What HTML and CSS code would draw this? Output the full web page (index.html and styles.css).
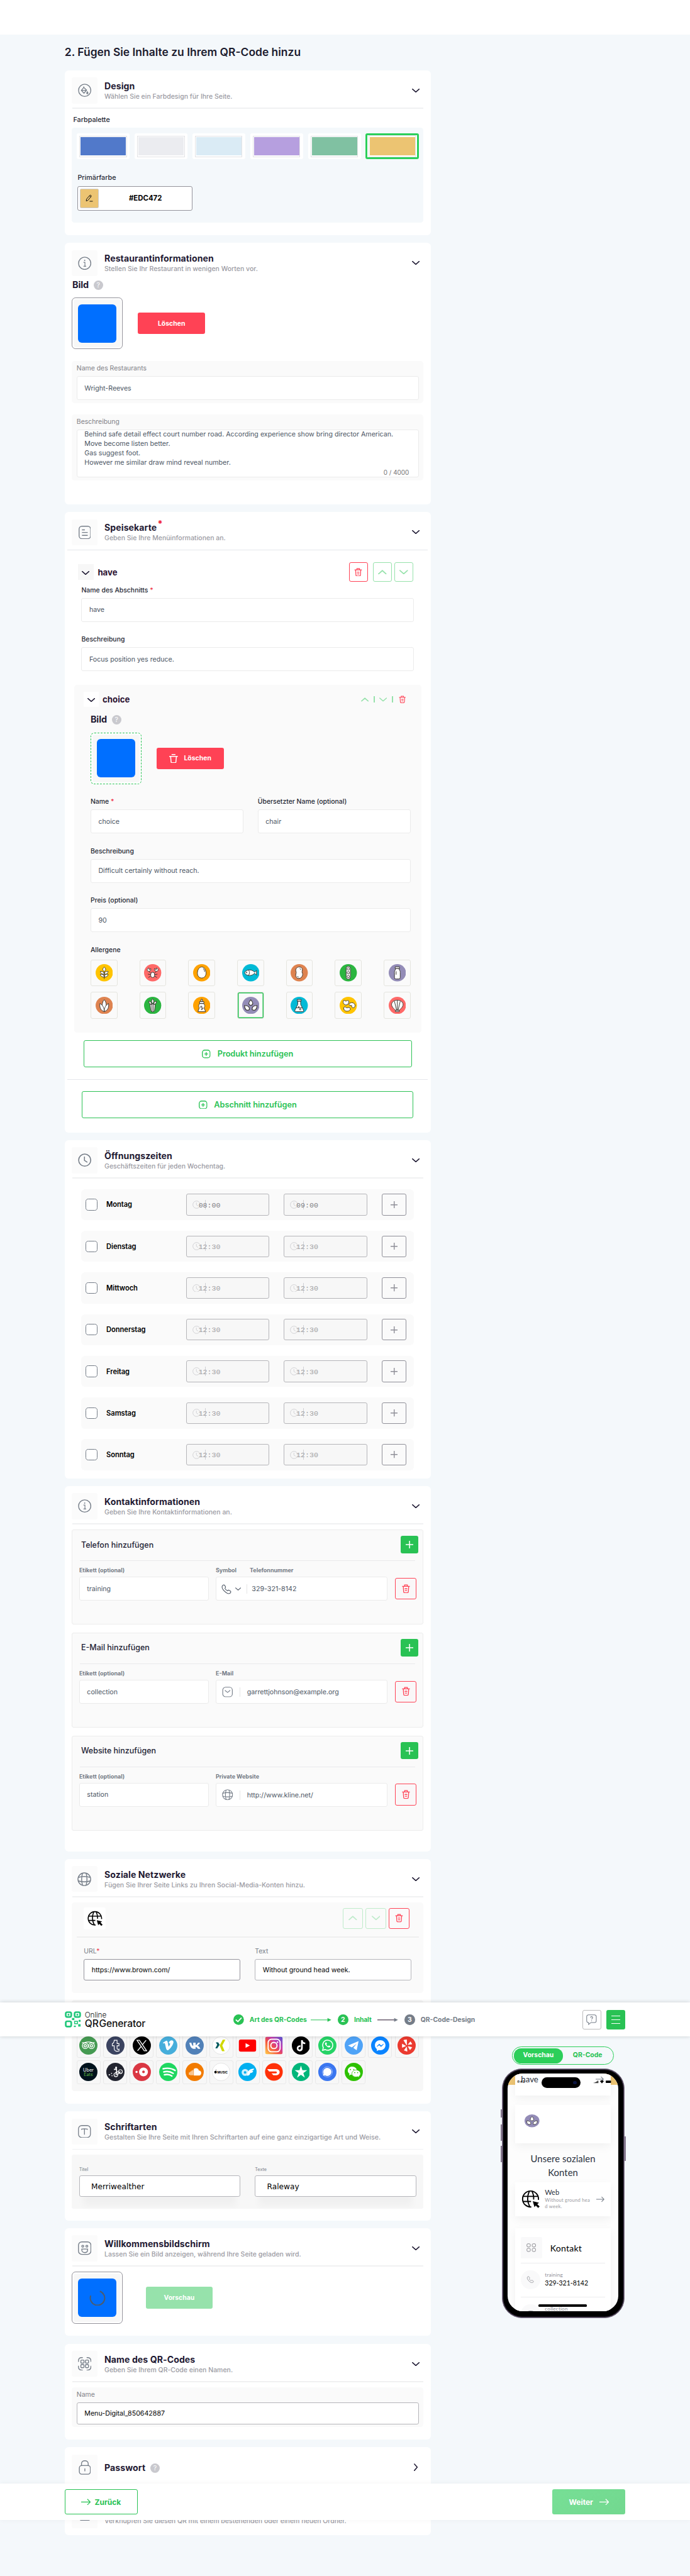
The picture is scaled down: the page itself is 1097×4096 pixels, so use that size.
FILE: index.html
```html
<!DOCTYPE html>
<html lang="de">
<head>
<meta charset="utf-8">
<title>Online QR Generator</title>
<link rel="stylesheet" href="styles.css">
</head>
<body>
<svg class="defs" width="0" height="0">
  <symbol id="chev" viewBox="0 0 16 8"><path d="M1 .8 8 7 15 .8" fill="none" stroke="currentColor" stroke-width="2" stroke-linecap="round" stroke-linejoin="round"/></symbol>
  <symbol id="trash" viewBox="0 0 18 20"><path d="M1.2 4.6h15.6M6 4V1.6h6V4M3 5l.8 11.6c.1 1.4.8 2.2 2.2 2.2h6c1.400 0 2.100-.8 2.200-2.200L15 5M6.800 10h4.400M7.300 14h3.400" fill="none" stroke="currentColor" stroke-width="1.800" stroke-linecap="round"/></symbol>
  <symbol id="plus" viewBox="0 0 16 16"><path d="M8 0v16M0 8h16" fill="none" stroke="currentColor" stroke-width="2"/></symbol>
  <symbol id="boxplus" viewBox="0 0 18 18"><rect x="1" y="1" width="16" height="16" rx="5" fill="none" stroke="currentColor" stroke-width="1.800"/><path d="M9 5.200v7.600M5.200 9h7.600" stroke="currentColor" stroke-width="1.800"/></symbol>
  <symbol id="info" viewBox="0 0 28 28"><circle cx="14" cy="14" r="12.800" fill="none" stroke="currentColor" stroke-width="1.800"/><path d="M11.500 12h3v8M11.500 20.200h5.500" fill="none" stroke="currentColor" stroke-width="1.500"/><circle cx="14" cy="8" r="1.300" fill="currentColor"/></symbol>
  <symbol id="clock" viewBox="0 0 28 28"><circle cx="14" cy="14" r="12.600" fill="none" stroke="currentColor" stroke-width="2"/><path d="M13.500 6.500v8l6 4" fill="none" stroke="currentColor" stroke-width="2"/></symbol>
  <symbol id="globe" viewBox="0 0 28 28"><g fill="none" stroke="currentColor" stroke-width="1.800"><circle cx="14" cy="14" r="12.800"/><path d="M10.500 1.700c-2.500 8-2.500 16.500 0 24.600M17.500 1.700c2.500 8 2.500 16.500 0 24.600M1.700 10.500c8-2.500 16.500-2.500 24.600 0M1.700 17.500c8 2.500 16.500 2.500 24.600 0"/></g></symbol>
  <symbol id="phone" viewBox="0 0 22 22"><path d="M2 3.800C3 1.800 5.500.600 6.800 2.200l2 3c.9 1.500-.1 2.500-1 3.500-.7.900 4.400 6.100 5.500 5.500 1.100-.900 2.100-1.800 3.500-1l3 2c1.600 1.300.4 3.900-1.500 4.900C12.500 23-1 10 2 3.800z" fill="none" stroke="currentColor" stroke-width="1.500"/></symbol>
  <symbol id="mail" viewBox="0 0 22 22"><rect x="1" y="1" width="20" height="20" rx="6" fill="none" stroke="currentColor" stroke-width="1.500"/><path d="M5.500 7.500 11 12l5.500-4.500" fill="none" stroke="currentColor" stroke-width="1.500"/></symbol>
  <symbol id="webcur" viewBox="0 0 32 32"><path d="M29.500 17.500A14 14 0 1 0 17 30M13.500 2c-4 9-4 19 1 28M18 2c2.500 5 3.500 10 3 15M2.500 11.500h27M2.500 20.500h14" fill="none" stroke="#000" stroke-width="2.100"/><path d="m19.500 20 3 10.500 2.300-2.800 4.200 4.200 2.600-2.600-4.200-4.200 3.100-2.300z"/></symbol>
  <symbol id="arrow" viewBox="0 0 20 14"><path d="M0 7h19M13 1l6 6-6 6" fill="none" stroke="currentColor" stroke-width="1.600"/></symbol>
  <symbol id="seeds" viewBox="0 0 36 36"><g fill="#fff" stroke="#3d3a36" stroke-width="1.500"><path d="M18 6c5 5.500 6 10.500 0 12-6-1.500-5-6.500 0-12z"/><path d="M5 18c7 0 11 3 10 9-6 3-10-1-10-9zM31 18c-7 0-11 3-10 9 6 3 10-1 10-9z"/></g></symbol>
</svg>

<div class="page">
<div class="strip"></div>
<div class="columns">
<main>
<h1>2. Fügen Sie Inhalte zu Ihrem QR-Code hinzu</h1>

<section class="card c-design">
  <div class="head"><span class="ic"><svg width="28" height="28" viewBox="0 0 28 28" fill="none" stroke="currentColor" stroke-width="1.700"><circle cx="14" cy="14" r="12.800"/><path d="M12 6v3M12 8l6 5.500-5.500 6.500L7 14zM7.500 14H18M19.500 17c2 3 1.500 4 0 4s-2-1 0-4z"/></svg></span>
    <div class="tt"><h2>Design</h2><p>Wählen Sie ein Farbdesign für Ihre Seite.</p></div><svg class="chev"><use href="#chev"/></svg></div>
  <div class="rule"></div>
  <div class="lbl-pal">Farbpalette</div>
  <div class="palette">
    <div class="swatches"><span class="sw s1"><i></i></span><span class="sw s2"><i></i></span><span class="sw s3"><i></i></span><span class="sw s4"><i></i></span><span class="sw s5"><i></i></span><span class="sw s6"><i></i></span></div>
    <div class="lbl-prim">Primärfarbe</div>
    <div class="picker"><span class="pick"><svg width="16" height="16" viewBox="0 0 16 16" fill="none" stroke="#111" stroke-width="1.300"><path d="m1.500 14 .5-4 7-8c1.500-1.200 3.800.8 2.700 2.500L5 12.500zM8 3l3 2.800M8.500 14.500H15"/></svg></span><b>#EDC472</b></div>
  </div>
</section>

<section class="card c-rest">
  <div class="head"><span class="ic"><svg width="28" height="28"><use href="#info"/></svg></span>
    <div class="tt"><h2>Restaurantinformationen</h2><p>Stellen Sie Ihr Restaurant in wenigen Worten vor.</p></div><svg class="chev"><use href="#chev"/></svg></div>
  <div class="bild bild-a">Bild<span class="q">?</span></div>
  <div class="imgrow ir-a"><span class="img"><i></i></span><span class="btn red">Löschen</span></div>
  <div class="fpanel fp-a"><label>Name des Restaurants</label><div class="inp">Wright-Reeves</div></div>
  <div class="fpanel fp-b"><label>Beschreibung</label><div class="inp area"><div>Behind safe detail effect court number road. According experience show bring director American.<br>Move become listen better.<br>Gas suggest foot.<br>However me similar draw mind reveal number.</div><small>0 / 4000</small></div></div>
</section>

<section class="card c-menu">
  <div class="head"><span class="ic"><svg width="26" height="28" viewBox="0 0 26 28" fill="none" stroke="currentColor" stroke-width="1.800"><rect x="1" y="1" width="24" height="26" rx="6"/><path d="M7 8.500h6M7 14h12M7 20h12"/></svg></span>
    <div class="tt tt-m"><h2>Speisekarte<sup>*</sup></h2><p>Geben Sie Ihre Menüinformationen an.</p></div><svg class="chev"><use href="#chev"/></svg></div>
  <div class="rule thin"></div>
  <div class="sect"><span class="tog"><svg class="chev2"><use href="#chev"/></svg></span><b>have</b>
    <span class="sq rd"><svg width="17" height="18"><use href="#trash"/></svg></span><span class="sq gr up"><svg width="18" height="10"><use href="#chev"/></svg></span><span class="sq gr"><svg width="18" height="10"><use href="#chev"/></svg></span></div>
  <div class="fld f1"><label>Name des Abschnitts <em>*</em></label><div class="inp">have</div></div>
  <div class="fld f2"><label>Beschreibung</label><div class="inp">Focus position yes reduce.</div></div>
  <div class="product">
    <div class="prow"><span class="tog"><svg class="chev2"><use href="#chev"/></svg></span><b>choice</b><div class="mini"><svg class="mg up" width="16" height="9"><use href="#chev"/></svg><i></i><svg class="mg" width="16" height="9"><use href="#chev"/></svg><i></i><svg class="mr" width="15" height="16"><use href="#trash"/></svg></div></div>
    <div class="bild bild-b">Bild<span class="q">?</span></div>
    <div class="imgrow ir-b"><span class="img dash"><i></i></span><span class="btn red"><svg width="18" height="19" viewBox="0 0 18 19" fill="none" stroke="#fff" stroke-width="2"><path d="M5 1h8M0 5h18M3 5.500l1 11c.1 1 .6 1.500 1.500 1.500h7c.9 0 1.400-.5 1.500-1.500l1-11"/></svg>Löschen</span></div>
    <div class="two"><div><label>Name <em>*</em></label><div class="inp">choice</div></div><div><label>Übersetzter Name (optional)</label><div class="inp">chair</div></div></div>
    <div class="pf"><label>Beschreibung</label><div class="inp">Difficult certainly without reach.</div></div>
    <div class="pf"><label>Preis (optional)</label><div class="inp">90</div></div>
    <div class="pf"><label>Allergene</label></div>
    <div class="allergens">
      <span class="al"><svg viewBox="0 0 36 36"><circle cx="18" cy="18" r="18" fill="#ffc400"/><g class="ink"><path d="M18 6c4 4 4 7 0 9-4-2-4-5 0-9zM18 21c-5 0-8-2-8-6 5 0 8 2 8 6zm0 0c5 0 8-2 8-6-5 0-8 2-8 6zM18 27c-5 0-8-2-8-6 5 0 8 2 8 6zm0 0c5 0 8-2 8-6-5 0-8 2-8 6zM18 15v16"/></g></svg></span>
      <span class="al"><svg viewBox="0 0 36 36"><circle cx="18" cy="18" r="18" fill="#ff6968"/><g class="ink"><path d="M14 19 9 14M22 19l5-5M14 22l-6-1M22 22l6-1M14 25l-5 3M22 25l5 3"/><path d="M10 8c-5 2-4 7 0 7 3 0 5-2 4-6l-3 3zM26 8c5 2 4 7 0 7-3 0-5-2-4-6l3 3z"/><rect x="14" y="17" width="8" height="11" rx="4"/></g></svg></span>
      <span class="al"><svg viewBox="0 0 36 36"><circle cx="18" cy="18" r="18" fill="#ffa200"/><g class="ink"><path d="M18 6c6 0 9 7 9 13s-4 10-9 10-9-4-9-10 3-13 9-13z"/><path d="M21 9c2 2 3 4 3 7" fill="none"/></g></svg></span>
      <span class="al"><svg viewBox="0 0 36 36"><circle cx="18" cy="18" r="18" fill="#00bad6"/><g class="ink"><path d="M5 18c2-6 14-9 21-1l4-4v10l-4-4c-7 8-19 5-21-1z"/><path d="M13 12c3 4 3 8 0 12" fill="none"/><circle cx="9" cy="17.500" r="1"/></g></svg></span>
      <span class="al"><svg viewBox="0 0 36 36"><circle cx="18" cy="18" r="18" fill="#de8350"/><g class="ink"><path d="M18 6c5 0 8 4 6 9-1 3 2 4 1 8-1 4-4 7-8 7s-7-4-6-9c1-3 1-3 0-7-1-5 3-8 7-8z"/><path d="M19 9c2 1 2 2 2 3M14 25c1 2 2 2 3 2" fill="none"/></g></svg></span>
      <span class="al"><svg viewBox="0 0 36 36"><circle cx="18" cy="18" r="18" fill="#2bb540"/><g class="ink"><rect x="13.500" y="4.500" width="9" height="27" rx="4.500"/><circle cx="18" cy="10" r="2.500"/><circle cx="18" cy="18" r="2.500"/><circle cx="18" cy="26" r="2.500"/></g></svg></span>
      <span class="al"><svg viewBox="0 0 36 36"><circle cx="18" cy="18" r="18" fill="#938cb7"/><g class="ink"><path d="M14 9v3c-2 2-2 3-2 6v10q0 3 3 3h6q3 0 3-3V18c0-3 0-4-2-6V9z"/><rect x="13.500" y="5.500" width="9" height="3.500"/><path d="M15.500 15v7" fill="none"/></g></svg></span>
      <span class="al"><svg viewBox="0 0 36 36"><circle cx="18" cy="18" r="18" fill="#de8350"/><g class="ink"><path d="M18 6c5 5 6 15 0 24-6-9-5-19 0-24z"/><path d="M9 14c-1 8 1 14 9 17 0-8-3-14-9-17zM27 14c1 8-1 14-9 17 0-8 3-14 9-17z"/></g></svg></span>
      <span class="al"><svg viewBox="0 0 36 36"><circle cx="18" cy="18" r="18" fill="#2bb540"/><g class="ink"><path d="M18 4c3 4 3 7 0 10-3-3-3-6 0-10zM10 9c4 1 6 3 6 7-4 0-6-3-6-7zM26 9c-4 1-6 3-6 7 4 0 6-3 6-7zM12.500 15h11L22 29q-4 5-8 0zM16.500 16v15M19.500 16v15"/></g></svg></span>
      <span class="al"><svg viewBox="0 0 36 36"><circle cx="18" cy="18" r="18" fill="#ffa200"/><g class="ink"><path d="M17 5h2l1 5h-4zM13.500 10h9v4h-9zM14 14h8c3 4 3 5 1 9l3 8H10l3-8c-2-4-2-5 1-9z"/><circle cx="17" cy="21" r="1.500"/><circle cx="20" cy="24" r="1"/><circle cx="18" cy="26" r="1"/></g></svg></span>
      <span class="al on"><svg viewBox="0 0 36 36"><circle cx="18" cy="18" r="18" fill="#938cb7"/><use href="#seeds"/></svg></span>
      <span class="al"><svg viewBox="0 0 36 36"><circle cx="18" cy="18" r="18" fill="#00bad6"/><g class="ink"><path d="M15 9v7L9 28q-1 3 2 3h14q3 0 2-3l-6-12V9zM14 5.500h8V9h-8zM11.500 23h13" /><circle cx="17" cy="21" r="1"/><circle cx="20" cy="26" r="1.500"/></g></svg></span>
      <span class="al"><svg viewBox="0 0 36 36"><circle cx="18" cy="18" r="18" fill="#ffc400"/><g class="ink"><path d="M8 8c2-2 3 1 5 1s4-3 6 0c1 4-2 8-6 8s-7-5-5-9zM20 15c2-4 10-4 12 2 1 5-4 7-6 5s1-4-2-4-5 0-4-3zM9 22c2-3 4 1 6 1s5-2 7 1c1 4-3 6-7 6s-8-4-6-8z"/></g></svg></span>
      <span class="al"><svg viewBox="0 0 36 36"><circle cx="18" cy="18" r="18" fill="#ff6968"/><g class="ink"><path d="M18 7c5 0 12 3 12 9 0 5-5 9-8 12h-8c-3-3-8-7-8-12 0-6 7-9 12-9zM14 28h8v3h-8z"/><path d="M16.500 28 12 9.500M19.500 28 24 9.500M18 28V7" fill="none"/></g></svg></span>
    </div>
  </div>
  <div class="add a1"><svg width="18" height="18"><use href="#boxplus"/></svg>Produkt hinzufügen</div>
  <div class="rule thin r2"></div>
  <div class="add a2"><svg width="18" height="18"><use href="#boxplus"/></svg>Abschnitt hinzufügen</div>
</section>

<section class="card c-hours">
  <div class="head"><span class="ic"><svg width="28" height="28"><use href="#clock"/></svg></span>
    <div class="tt"><h2>Öffnungszeiten</h2><p>Geschäftszeiten für jeden Wochentag.</p></div><svg class="chev"><use href="#chev"/></svg></div>
  <div class="rule"></div>
  <div class="days">
    <div class="day set"><i class="cb"></i><b>Montag</b><span class="time"><svg><use href="#clock"/></svg><u></u><s>08:00</s></span><span class="time"><svg><use href="#clock"/></svg><u></u><s>09:00</s></span><span class="pl"><svg><use href="#plus"/></svg></span></div>
    <div class="day"><i class="cb"></i><b>Dienstag</b><span class="time"><svg><use href="#clock"/></svg><u></u><s>12:30</s></span><span class="time"><svg><use href="#clock"/></svg><u></u><s>12:30</s></span><span class="pl"><svg><use href="#plus"/></svg></span></div>
    <div class="day"><i class="cb"></i><b>Mittwoch</b><span class="time"><svg><use href="#clock"/></svg><u></u><s>12:30</s></span><span class="time"><svg><use href="#clock"/></svg><u></u><s>12:30</s></span><span class="pl"><svg><use href="#plus"/></svg></span></div>
    <div class="day"><i class="cb"></i><b>Donnerstag</b><span class="time"><svg><use href="#clock"/></svg><u></u><s>12:30</s></span><span class="time"><svg><use href="#clock"/></svg><u></u><s>12:30</s></span><span class="pl"><svg><use href="#plus"/></svg></span></div>
    <div class="day"><i class="cb"></i><b>Freitag</b><span class="time"><svg><use href="#clock"/></svg><u></u><s>12:30</s></span><span class="time"><svg><use href="#clock"/></svg><u></u><s>12:30</s></span><span class="pl"><svg><use href="#plus"/></svg></span></div>
    <div class="day"><i class="cb"></i><b>Samstag</b><span class="time"><svg><use href="#clock"/></svg><u></u><s>12:30</s></span><span class="time"><svg><use href="#clock"/></svg><u></u><s>12:30</s></span><span class="pl"><svg><use href="#plus"/></svg></span></div>
    <div class="day"><i class="cb"></i><b>Sonntag</b><span class="time"><svg><use href="#clock"/></svg><u></u><s>12:30</s></span><span class="time"><svg><use href="#clock"/></svg><u></u><s>12:30</s></span><span class="pl"><svg><use href="#plus"/></svg></span></div>
  </div>
</section>

<section class="card c-contact">
  <div class="head"><span class="ic"><svg width="28" height="28"><use href="#info"/></svg></span>
    <div class="tt"><h2>Kontaktinformationen</h2><p>Geben Sie Ihre Kontaktinformationen an.</p></div><svg class="chev"><use href="#chev"/></svg></div>
  <div class="rule"></div>
  <div class="contacts">
    <div class="cp"><div class="cph">Telefon hinzufügen<span class="gplus"><svg><use href="#plus"/></svg></span></div><hr>
      <div class="crow"><div><label>Etikett (optional)</label><div class="inp">training</div></div>
      <div><div class="lb2"><label>Symbol</label><label>Telefonnummer</label></div><div class="inp tel"><svg class="ph" width="21" height="21"><use href="#phone"/></svg><svg width="12" height="7"><use href="#chev"/></svg><i></i>329-321-8142</div></div>
      <span class="del"><svg width="17" height="19"><use href="#trash"/></svg></span></div></div>
    <div class="cp"><div class="cph">E-Mail hinzufügen<span class="gplus"><svg><use href="#plus"/></svg></span></div><hr>
      <div class="crow"><div><label>Etikett (optional)</label><div class="inp">collection</div></div>
      <div><label>E-Mail</label><div class="inp ico"><svg width="23" height="22"><use href="#mail"/></svg><i></i>garrettjohnson@example.org</div></div>
      <span class="del"><svg width="17" height="19"><use href="#trash"/></svg></span></div></div>
    <div class="cp"><div class="cph">Website hinzufügen<span class="gplus"><svg><use href="#plus"/></svg></span></div><hr>
      <div class="crow"><div><label>Etikett (optional)</label><div class="inp">station</div></div>
      <div><label>Private Website</label><div class="inp ico"><svg width="23" height="23"><use href="#globe"/></svg><i></i>http://www.kline.net/</div></div>
      <span class="del"><svg width="17" height="19"><use href="#trash"/></svg></span></div></div>
  </div>
</section>

<section class="card c-social">
  <div class="head"><span class="ic"><svg width="29" height="29"><use href="#globe"/></svg></span>
    <div class="tt"><h2>Soziale Netzwerke</h2><p>Fügen Sie Ihrer Seite Links zu Ihren Social-Media-Konten hinzu.</p></div><svg class="chev"><use href="#chev"/></svg></div>
  <div class="rule"></div>
  <div class="web">
    <div class="webh"><span class="wi"><svg width="32" height="32"><use href="#webcur"/></svg></span><span class="sq gr up"><svg width="18" height="10"><use href="#chev"/></svg></span><span class="sq gr"><svg width="18" height="10"><use href="#chev"/></svg></span><span class="sq rd"><svg width="17" height="18"><use href="#trash"/></svg></span></div>
    <div class="webr"></div>
    <div class="webf"><div><label>URL<em>*</em></label><div class="inp dk">https://www.brown.com/</div></div><div><label>Text</label><div class="inp md">Without ground head week.</div></div></div>
  </div>
  <div class="tiles">
    <span><svg viewBox="0 0 38 38"><circle cx="19" cy="19" r="19" fill="#459a52"/><g fill="none" stroke="#fff" stroke-width="1.800"><circle cx="12.500" cy="19.500" r="6"/><circle cx="25.500" cy="19.500" r="6"/><circle cx="12.500" cy="19.500" r="2.500"/><circle cx="25.500" cy="19.500" r="2.500"/><path d="M6 13.500h4c5-2 13-2 18 0h4"/></g></svg></span>
    <span><svg viewBox="0 0 38 38"><circle cx="19" cy="19" r="19" fill="#3b4360"/><path d="M16.500 8h6v7h4v4.500h-4V25c0 2 2 2.500 4 1.500v4c-5 1.500-10 0-10-5v-6h-4v-4c3-1.500 4-4 4-7.500z" fill="none" stroke="#fff" stroke-width="1.500"/></svg></span>
    <span><svg viewBox="0 0 38 38"><circle cx="19" cy="19" r="19" fill="#000"/><path d="M9 8h5l15 22h-5zM28 8 20 17.500M17.500 21 10 30" fill="none" stroke="#fff" stroke-width="1.800"/></svg></span>
    <span><svg viewBox="0 0 38 38"><circle cx="19" cy="19" r="19" fill="#46aedb"/><path d="m8 13 7-4c3 0 3 4 4 9 1 4 1 4 3 0 2-3 1-4-2-4 1-7 10-8 10-2-1 7-9 16-12 17-4 0-4-9-6-14-1-2-2-1-3 0z" fill="#fff"/></svg></span>
    <span><svg viewBox="0 0 38 38"><circle cx="19" cy="19" r="19" fill="#5181b8"/><path d="M8 13h4c1 5 3 7 4 7v-7h5v5c2 0 4-3 5-5h4c-1 3-3 5-5 6 2 1 5 4 6 7h-5c-1-2-3-4-5-4v4h-3c-6 0-9-6-10-13z" fill="#fff"/></svg></span>
    <span><svg viewBox="0 0 38 38"><circle cx="19" cy="19" r="18.500" fill="#fff" stroke="#ddd"/><path d="M8 12.500h5l3 5-5 7.500H7l4-7.500z" fill="#005a5f"/><path d="M22.500 7H28l-6.500 12 5 12H21l-5-12z" fill="#d0d800"/></svg></span>
    <span><svg viewBox="0 0 38 38"><rect x="1" y="6.500" width="36" height="25.500" rx="4" fill="#f00"/><path d="m15 14 9 5-9 5z" fill="#fff"/></svg></span>
    <span><svg viewBox="0 0 38 38"><defs><linearGradient id="ig" x1="0" y1="1" x2="1" y2="0"><stop offset="0" stop-color="#ffd04b"/><stop offset=".4" stop-color="#f5533d"/><stop offset=".65" stop-color="#c837ab"/><stop offset="1" stop-color="#5558d6"/></linearGradient></defs><rect x="1" y="1" width="36" height="36" rx="3" fill="url(#ig)"/><g fill="none" stroke="#fff" stroke-width="2.500"><rect x="7" y="6" width="25" height="26" rx="7"/><circle cx="19" cy="19" r="6.500"/></g><circle cx="26.500" cy="12" r="1.600" fill="#fff"/></svg></span>
    <span><svg viewBox="0 0 38 38"><circle cx="19" cy="19" r="19" fill="#000"/><path d="M21 8v16c0 7-9 7-9 1 0-4 3-5 6-4.500M21 8c0 4 3 6.500 7 6.500" fill="none" stroke="#fff" stroke-width="3.500"/></svg></span>
    <span><svg viewBox="0 0 38 38"><circle cx="19" cy="19" r="19" fill="#25d366"/><path d="m9 29 1.500-5.500A10.500 10.500 0 1 1 14.500 27.500z" fill="none" stroke="#fff" stroke-width="2"/><path d="M15 13c-2 2-1 4 2 7s6 4 8 2c1-2-2-3-3-3l-1.500 1.500C19 20 17.500 18 17 17l1-1.500c0-1-1-4-3-2.500z" fill="#fff"/></svg></span>
    <span><svg viewBox="0 0 38 38"><circle cx="19" cy="19" r="19" fill="#4fa3f7"/><path d="m7 19 22-9-4 19-7-5 7-9-10 8z" fill="#fff"/></svg></span>
    <span><svg viewBox="0 0 38 38"><circle cx="19" cy="19" r="19" fill="#0a84ff"/><path d="M19 8c6 0 11 4 11 10.500S25 29 19 29l-3-.5-4 2v-4c-3-2-4-5-4-8C8 12 13 8 19 8z" fill="#fff"/><path d="m12 21 5-5 4 3.500 5-3.500-5 5.500-4-3.500z" fill="#0a84ff" stroke="#0a84ff"/></svg></span>
    <span><svg viewBox="0 0 38 38"><circle cx="19" cy="19" r="19" fill="#eb3a2f"/><path d="m13 8 6-1v11zM22 17l5-6 3 5zM22 21l8 2-4 5zM19 22l1 9-6-2zM17 20l-7 3v-7z" fill="#fff" stroke="#fff" stroke-linejoin="round"/></svg></span>
    <span><svg viewBox="0 0 38 38"><circle cx="19" cy="19" r="19" fill="#00121c"/><text x="19" y="18" text-anchor="middle" font-size="9.500" fill="#fff">Uber</text><text x="19" y="27" text-anchor="middle" font-size="9.500" fill="#5fb545">Eats</text></svg></span>
    <span><svg viewBox="0 0 38 38"><circle cx="19" cy="19" r="19" fill="#22242f"/><g fill="none" stroke="#fff" stroke-width="1.500"><circle cx="20" cy="25" r="4"/><circle cx="29.500" cy="18.500" r="4"/><path d="m20 25 2-6 7 0-5 5z"/><path d="m16 14 5-1 1 6-3 2" stroke-width="2.500"/></g><circle cx="20.500" cy="10" r="2" fill="#fff"/><path d="M5 25h3M10 22h2M11 27h2" stroke="#fff" stroke-width="2"/></svg></span>
    <span><svg viewBox="0 0 38 38"><circle cx="19" cy="19" r="19" fill="#da3743"/><circle cx="22.500" cy="19" r="6" fill="none" stroke="#fff" stroke-width="6.500"/><circle cx="8" cy="19" r="2.300" fill="#fff"/></svg></span>
    <span><svg viewBox="0 0 38 38"><circle cx="19" cy="19" r="19" fill="#1ed760"/><path d="M13 13c-1 0 8-2 24 2M9 0" fill="none"/><path d="M13.500 12.500c7-1.500 15-.5 22 3" transform="translate(-4)" fill="none" stroke="#fff" stroke-width="0"/><path d="M7.500 12.500c9-2 20-1 28 3.500M9 19c8-2 15-1 22 3M10.500 25c6-1.500 12-1 17.500 2.500" transform="translate(1.500)scale(.9 1)" fill="none" stroke="#fff" stroke-width="3.200" stroke-linecap="round"/></svg></span>
    <span><svg viewBox="0 0 38 38"><circle cx="19" cy="19" r="19" fill="#f27b00"/><path d="M18 13c5-3 9 0 9 4 7-1 6 9 1 9H18zM8 20v5M10.500 18v8M13 16.500V26M15.500 15v11" fill="#fff" stroke="#fff" stroke-width="1.400"/></svg></span>
    <span><svg viewBox="0 0 38 38"><circle cx="19" cy="19" r="18.500" fill="#fff" stroke="#ddd"/><circle cx="7.500" cy="19.500" r="2.700"/><path d="m8 16 1-1.500" stroke="#000"/><text x="22" y="21.800" text-anchor="middle" font-size="6.500" font-weight="700" fill="#000">MUSIC</text></svg></span>
    <span><svg viewBox="0 0 38 38"><circle cx="19" cy="19" r="19" fill="#00aff0"/><circle cx="14" cy="20" r="5" fill="none" stroke="#cfeffc" stroke-width="4.500"/><path d="M18 27c1-10 5-15 15-15-1 3-3 4-6 5h4c-1 3-3 4-6 4-1 4-3 6-7 6z" fill="#fff"/></svg></span>
    <span><svg viewBox="0 0 38 38"><circle cx="19" cy="19" r="18.500" fill="#ff3008"/><path d="M5 13h19c10 1 9 13-1 13h-5l-4-4h9c3 0 3-4 0-4H9z" fill="#fff"/></svg></span>
    <span><svg viewBox="0 0 38 38"><circle cx="19" cy="19" r="19" fill="#00b67a"/><path d="m19 6 3 9.500h10l-8 6 3 9.500-8-6-8 6 3-9.500-8-6h10z" fill="#fff"/></svg></span>
    <span><svg viewBox="0 0 38 38"><circle cx="19" cy="19" r="19" fill="#3a76f0"/><path d="M19 10.500a8.500 8.500 0 1 1-4.500 15.700L10 27l1-4.500a8.500 8.500 0 0 1 8-12z" fill="#fff"/><circle cx="19" cy="19" r="10.500" fill="none" stroke="#fff" stroke-dasharray="2 1"/></svg></span>
    <span><svg viewBox="0 0 38 38"><circle cx="19" cy="19" r="19" fill="#2dc100"/><path d="M15.500 8c6 0 10 4 10 8.500S21 25 15.500 25l-3-.5L9 26.500l1-3.500C3 18 7 8 15.500 8z" fill="#fff"/><path d="M24 15c5 0 9 3.500 9 7.500 0 2.500-1 4-3 5.500l.5 2.500-3-1.500C20 31 15 27 15 22.500c0-4 4-7.500 9-7.500z" fill="#fff" stroke="#2dc100"/><g fill="#2dc100"><circle cx="12" cy="14" r="1.200"/><circle cx="19" cy="14" r="1.200"/><circle cx="21" cy="20.500" r="1.200"/><circle cx="27" cy="20.500" r="1.200"/></g></svg></span>
  </div>
</section>

<section class="card c-fonts">
  <div class="head"><span class="ic"><svg width="27" height="27" viewBox="0 0 27 27" fill="none" stroke="currentColor" stroke-width="1.700"><rect x="1" y="1" width="25" height="25" rx="7"/><path d="M7.500 10V8.500Q13.500 7 19.500 8.500V10M13.500 8v12"/></svg></span>
    <div class="tt"><h2>Schriftarten</h2><p class="wide">Gestalten Sie Ihre Seite mit Ihren Schriftarten auf eine ganz einzigartige Art und Weise.</p></div><svg class="chev"><use href="#chev"/></svg></div>
  <div class="rule"></div>
  <div class="fonts"><div><label>Titel</label><div class="inp">Merriwealther</div></div><div><label>Texte</label><div class="inp">Raleway</div></div></div>
</section>

<section class="card c-welcome">
  <div class="head"><span class="ic"><svg width="28" height="28" viewBox="0 0 28 28" fill="none" stroke="currentColor" stroke-width="1.800"><rect x="1" y="1" width="26" height="26" rx="7"/><circle cx="10" cy="10" r="2"/><circle cx="18.500" cy="10" r="2"/><path d="M8 16h12v2c0 7-12 7-12 0z"/></svg></span>
    <div class="tt"><h2>Willkommensbildschirm</h2><p>Lassen Sie ein Bild anzeigen, während Ihre Seite geladen wird.</p></div><svg class="chev"><use href="#chev"/></svg></div>
  <div class="rule"></div>
  <div class="imgrow ir-c"><span class="img"><i><svg width="34" height="34" viewBox="0 0 34 34" fill="none" stroke="#4b5c6f" stroke-width="2.600"><path d="M3 12a15 15 0 1 0 19-9"/></svg></i></span><span class="btn grn">Vorschau</span></div>
</section>

<section class="card c-name">
  <div class="head"><span class="ic"><svg width="28" height="28" viewBox="0 0 28 28" fill="none" stroke="currentColor" stroke-width="1.800"><path d="M1 10V8c0-5 2-7 7-7h2M18 1h2c5 0 7 2 7 7v2M27 18v2c0 5-2 7-7 7h-2M10 27H8c-5 0-7-2-7-7v-2"/><rect x="6" y="6" width="6.500" height="6.500" rx="1.500"/><rect x="15.500" y="6" width="6.500" height="6.500" rx="1.500"/><rect x="6" y="15.500" width="6.500" height="6.500" rx="1.500"/><rect x="15.500" y="15.500" width="6.500" height="6.500" rx="1.500"/></svg></span>
    <div class="tt"><h2>Name des QR-Codes</h2><p>Geben Sie Ihrem QR-Code einen Namen.</p></div><svg class="chev"><use href="#chev"/></svg></div>
  <div class="rule"></div>
  <div class="fpanel fp-c"><label>Name</label><div class="inp md">Menu-Digital_850642887</div></div>
</section>

<section class="card c-pass">
  <div class="head"><span class="ic"><svg width="26" height="30" viewBox="0 0 26 30" fill="none" stroke="currentColor" stroke-width="1.800"><rect x="1.500" y="11" width="23" height="18" rx="5"/><path d="M6 11V7c0-8 14-8 14 0v4M13 17v6"/></svg></span>
    <div class="tt tt-p"><h2>Passwort</h2><span class="q">?</span></div><svg class="chevr"><use href="#chev"/></svg></div>
</section>

<section class="card c-folder">
  <div class="head"><span class="ic"><svg width="26" height="24" viewBox="0 0 26 24" fill="none" stroke="currentColor" stroke-width="1.800"><path d="M1 7q0-6 6-6h3l3 4h6q6 0 6 6v6q0 6-6 6H7q-6 0-6-6z"/></svg></span>
    <div class="tt"><h2>Ordner</h2><p>Verknüpfen Sie diesen QR mit einem bestehenden oder einem neuen Ordner.</p></div></div>
</section>
</main>

<aside>
  <div class="tabs"><b>Vorschau</b><b>QR-Code</b></div>
  <div class="device">
    <div class="screen">
      <div class="band"></div>
      <div class="pc have">have<svg width="17" height="13"><use href="#arrow"/></svg></div>
      <div class="pc dish"><svg width="31" height="27" viewBox="0 0 36 36" preserveAspectRatio="none"><circle cx="18" cy="18" r="18" fill="#938cb7"/><use href="#seeds"/></svg></div>
      <h3>Unsere sozialen Konten</h3>
      <div class="pc link"><svg width="39" height="38"><use href="#webcur"/></svg><div><b>Web</b><small>Without ground hea<br>d week.</small></div><svg class="go" width="17" height="13"><use href="#arrow"/></svg></div>
      <div class="pc kontakt">
        <div class="kh"><span><svg width="20" height="18" viewBox="0 0 20 18" fill="none" stroke="#8a8a90" stroke-width="1.300"><rect x="1" y="1" width="7" height="6.500" rx="2"/><rect x="12" y="1" width="7" height="6.500" rx="2"/><rect x="1" y="10.500" width="7" height="6.500" rx="2"/><rect x="12" y="10.500" width="7" height="6.500" rx="2"/></svg></span>Kontakt</div>
        <div class="kr"><span><svg width="16" height="15"><use href="#phone"/></svg></span><div><small>training</small><b>329-321-8142</b></div></div>
        <div class="kr"><span><svg width="15" height="14"><use href="#mail"/></svg></span><div><small>collection</small></div></div>
      </div>
      <div class="status"><b>9:41</b><svg width="37" height="8" viewBox="0 0 37 8"><path d="M1 7V6M3.500 7V5M6 7V3.500M8.500 7V2" stroke="#000" stroke-width="1.800"/><path d="M13 3c2.500-2.500 5.500-2.500 8 0l-4 4.500z"/><rect x="25" y="1.500" width="11" height="5" rx="1"/></svg></div>
      <div class="island"><i></i></div>
      <div class="homebar"></div>
    </div>
  </div>
</aside>
</div>

<header class="bar">
  <div class="logo"><svg width="34" height="34" viewBox="0 0 34 34"><g fill="none" stroke="#21c77a" stroke-width="3.500"><rect x="2" y="2" width="11.500" height="10" rx="3"/><rect x="20.500" y="2" width="11.500" height="10" rx="3"/><rect x="2" y="21" width="11.500" height="11" rx="3"/></g><g fill="#21c77a"><rect x="6" y="5.500" width="3.500" height="3.500"/><rect x="24.500" y="5.500" width="3.500" height="3.500"/><rect x="15" y="14" width="5" height="4.500"/><rect x="29" y="18" width="4" height="4"/><rect x="28" y="27" width="5" height="5"/><rect x="19" y="30" width="4" height="3"/></g><rect x="20.500" y="21" width="6" height="5" fill="none" stroke="#21c77a" stroke-width="2"/></svg><div><span>Online</span><strong>QR Generator</strong></div></div>
  <div class="steps">
    <svg width="22" height="22" viewBox="0 0 22 22"><circle cx="11" cy="11" r="11" fill="#29c254"/><path d="m5 11 4.500 4 7.500-8" fill="none" stroke="#fff" stroke-width="2.400"/></svg><b class="g st1">Art des QR-Codes</b>
    <svg class="arr" width="43" height="10" viewBox="0 0 43 10"><path d="M0 5h36" stroke="#29c254" stroke-width="1.300"/><path d="m35 1 8 4-8 4z" fill="#29c254"/></svg>
    <i class="num gn">2</i><b class="g st2">Inhalt</b>
    <svg class="arr2" width="43" height="10" viewBox="0 0 43 10"><path d="M0 5h36" stroke="#220e27" stroke-width="1.300"/><path d="m35 1 8 4-8 4z" fill="#757d88"/></svg>
    <i class="num">3</i><b class="st3">QR-Code-Design</b>
  </div>
  <span class="help"><svg width="22" height="22" viewBox="0 0 22 22" fill="none" stroke="#757d88" stroke-width="1.400"><path d="M1 5q0-4 4-4h12q4 0 4 4v8q0 4-4 4h-7l-5 4v-4q-4 0-4-4z"/><path d="M9 7c0-3 4.500-3 4.500 0 0 1.500-2.200 1.800-2.200 3.500M11.300 12.500v1.500"/></svg></span>
  <span class="menu"><i></i><i></i><i></i></span>
</header>

<footer class="foot">
  <span class="back"><svg width="20" height="14"><use href="#arrow"/></svg>Zurück</span>
  <span class="next">Weiter<svg width="20" height="14"><use href="#arrow"/></svg></span>
</footer>
</div>
</body>
</html>
```
FILE: styles.css
```css
* { box-sizing: border-box; }
html { background: #f4f8fb; overflow: hidden; }
body { margin: 0; zoom: 0.7618; width: 1440px; height: 5376px; overflow: hidden; font-family: Inter, "Open Sans", sans-serif; color: #1f1f35; }
h1, h2, h3, p { margin: 0; }
em, i { font-style: normal; }
.defs { position: absolute; }
.page { position: relative; width: 1440px; height: 5376px; overflow: hidden; background: #f4f8fb; }
.strip { height: 72px; background: #fff; }
.columns { display: flex; padding: 0 135px; height: 5304px; overflow: hidden; }
main { width: 764px; }
svg { display: block; flex: none; }
h1 { margin: 22px 0 23px; font-size: 22.900px; font-weight: 600; line-height: 30px; color: #1b1b2e; white-space: nowrap; }

.card { background: #fff; border-radius: 8px; margin-bottom: 16px; overflow: hidden; }
.c-design { height: 344px; }
.c-rest { height: 546px; }
.c-menu { height: 1295px; }
.c-hours { height: 706px; }
.c-contact { height: 762px; }
.c-social { height: 511px; }
.c-fonts { height: 228px; }
.c-welcome { height: 225px; }
.c-name { height: 200px; }
.c-pass, .c-folder { height: 84px; }

.head { display: flex; align-items: center; height: 69px; padding: 15px 23px 0 15px; }
.ic { width: 53px; height: 54px; border-radius: 4px; background: #fbfbfb; color: #757d88; display: flex; align-items: center; justify-content: center; }
.tt { margin: 3px 0 0 15px; flex: 1; }
.tt h2 { font-size: 18.5px; line-height: 22px; font-weight: 700; letter-spacing: .1px; color: #1f1a33; }
.tt p { font-size: 13.8px; line-height: 20px; font-weight: 500; color: #9b9ba3; white-space: nowrap; }
.tt p.wide { font-size: 13.950px; }
.tt-m h2 { position: relative; line-height: 24px; }
.tt-m p { line-height: 22px; }
.tt-m sup { position: absolute; top: -6px; left: 111px; font-size: 19px; line-height: 22px; color: #f01530; }
.tt-p { display: flex; align-items: center; gap: 10px; }
.chev { width: 16px; height: 8px; color: #1f1a33; }
.chevr { width: 16px; height: 8px; color: #1f1a33; transform: rotate(-90deg); }
.rule { height: 2px; margin: 9px 16px 0; background: #f0f1f2; }
.thin { height: 1px; margin: 9px 6px 0; background: #e5e7eb; }

.lbl-pal, .lbl-prim { font-size: 14.1px; line-height: 20px; font-weight: 500; color: #1f2733; }
.lbl-pal { margin: 13px 18px 7px; }
.palette { margin: 0 15px; height: 198px; padding: 12px 10px; background: #f4f8fb; border-radius: 6px; }
.swatches { display: grid; grid-template-columns: repeat(6, 1fr); gap: 10px; }
.sw { height: 53px; background: #fff; border-radius: 4px; padding: 4px 6px; }
.sw i { display: block; height: 45px; border: 1px solid #e3e3e6; background-clip: content-box; padding: 2px 1px; }
.s1 i { background-color: #5179ca; }
.s2 i { background-color: #ebecf0; }
.s3 i { background-color: #daebf5; }
.s4 i { background-color: #b69fdf; }
.s5 i { background-color: #80c1a2; }
.s6 { border: 4px solid #2ccf5a; padding: 0 2px; }
.s6 i { background-color: #ecc472; }
.lbl-prim { margin: 29px 2px 7px; }
.picker { margin-left: 2px; width: 240px; height: 52px; border: 2px solid #94939b; border-radius: 4px; background: #fff; display: flex; align-items: center; padding-left: 3px; color: #000; font-size: 15px; }
.picker b { flex: 1; text-align: center; }
.pick { width: 40px; height: 40px; border: 1px solid #ccc; border-radius: 3px; background: #ecc472; display: flex; align-items: center; justify-content: center; }

.bild { display: flex; align-items: center; height: 22px; font-size: 19px; line-height: 22px; font-weight: 700; letter-spacing: -.2px; color: #1f1a33; }
.q { width: 20px; height: 20px; border-radius: 50%; background: #c9c9ce; color: #fff; font-size: 14px; line-height: 20px; text-align: center; font-weight: 400; }
.bild .q { margin: 1px 0 0 10px; }
.bild-a { margin: 8px 16px 15px; }
.imgrow { display: flex; align-items: center; }
.img { width: 106px; height: 108px; border: 2px solid #94939b; border-radius: 8px; padding: 2px; background: #f7f7f7 content-box; display: flex; align-items: center; justify-content: center; }
.img i { width: 80px; height: 80px; border-radius: 8px; background: #006fff; display: flex; align-items: center; justify-content: center; }
.dash { border: 1px dashed #29c254; background: linear-gradient(#f7f7f7, #f7f7f7) content-box, #fff; }
.btn { width: 140px; height: 45px; border-radius: 4px; color: #fff; font-size: 13.7px; font-weight: 700; display: flex; align-items: center; justify-content: center; gap: 13px; }
.red { background: #ff4255; }
.grn { background: #96e2ab; }
.ir-a { margin: 0 15px 24px; gap: 32px; }
.ir-b { gap: 32px; }
.ir-c { margin: 11px 15px 0; gap: 48px; }

label { display: block; padding-top: 1px; margin-bottom: -1px; font-size: 13.7px; line-height: 20px; color: #1f2733; font-weight: 500; white-space: nowrap; }
label em { color: #f0354b; }
.inp { height: 50px; border: 2px solid #ebebeb; border-radius: 4px; background: #fff; padding: 1px 15px 0; font-size: 14px; line-height: 46px; color: #4b5563; margin-top: 7px; white-space: nowrap; }
.fpanel { margin: 0 15px; padding: 5px 10px; background: #fafafa; border-radius: 6px; }
.fpanel label { color: #808086; font-weight: 400; }
.fp-a { height: 88px; margin-bottom: 24px; }
.fp-b { height: 138px; }
.fp-c { height: 83px; margin-top: 11px; }
.area { height: 100px; line-height: 20px; overflow: hidden; }
.area div { margin-top: -3px; }
.area small { display: block; text-align: right; margin: 0 4px 0; font-size: 13px; line-height: 20px; color: #757575; }
.inp.dk { height: 45px; line-height: 41px; border-color: #94939b; color: #000; }
.inp.md { height: 45px; line-height: 43px; border: 1px solid #b5b5ba; color: #000; }

.sect { display: flex; align-items: center; margin: 26px 36px 0 28px; height: 40px; }
.sect b, .prow b { flex: 1; margin-left: 9px; font-size: 17.400px; color: #2a1030; }
.tog { width: 32px; height: 32px; background: #f7f7f7; display: flex; align-items: center; justify-content: center; color: #1f1a33; }
.chev2 { width: 16px; height: 8px; margin-top: 3px; }
.sq { width: 40px; height: 40px; border: 1px solid; border-radius: 4px; display: flex; align-items: center; justify-content: center; }
.sq.rd { color: #ff4255; }
.sq.gr { color: #96e2ab; }
.sect .up { margin: 0 5px 0 10px; }
.up svg, svg.up { transform: scaleY(-1); }
.fld { margin: 7px 35px 0; }
.f2 { margin-top: 26px; }
.product { margin: 29px 20px 0; height: 725px; padding: 14px 22px 0 34px; background: #fafafa; border-radius: 6px; }
.prow { display: flex; align-items: center; height: 32px; margin-left: -15px; }
.prow .tog { background: #fff; }
.prow b { margin-left: 8px; }
.mini { display: flex; align-items: center; gap: 10px; margin-right: 10px; }
.mini i { width: 2px; height: 14px; background: #96e2ab; }
.mg { color: #96e2ab; }
.mr { color: #ff4255; margin-left: 2px; }
.bild-b { margin: 15px 0 16px; }
.two { display: grid; grid-template-columns: 1fr 1fr; gap: 30px; margin-top: 26px; }
.pf { margin-top: 26px; }
.allergens { margin-top: 11px; display: grid; grid-template-columns: repeat(7, 56px); justify-content: space-between; row-gap: 12px; }
.al { height: 56px; border: 2px solid #e5e5df; border-radius: 4px; display: flex; align-items: center; justify-content: center; }
.al svg { width: 36px; height: 36px; }
.al.on { box-shadow: inset 0 0 0 2px #29c254; }
.ink { fill: #fff; stroke: #3d3a36; stroke-width: 1.300px; stroke-linejoin: round; }
.add { height: 56px; border: 1px solid #2cc255; border-radius: 4px; display: flex; align-items: center; justify-content: center; gap: 14px; color: #29c254; font-size: 16.800px; font-weight: 600; letter-spacing: -.1px; }
.a1 { margin: 17px 39px 0; }
.r2 { margin-top: 25px; }
.a2 { margin: 24px 36px 0; }

.days { margin: 22px 35px 0; display: flex; flex-direction: column; gap: 22px; }
.day { height: 65px; background: #fafafa; border-radius: 8px; padding: 0 16px 0 9px; display: flex; align-items: center; }
.cb { width: 24px; height: 24px; border: 2px solid #757d88; border-radius: 6px; background: #fff; }
.day b { flex: 1; margin-left: 19px; font-size: 14.700px; font-weight: 600; letter-spacing: -.1px; color: #000; }
.time { width: 174px; height: 45px; margin-right: 30px; border: 1px solid #b5b5b9; border-radius: 4px; background: #f7f7f7; display: flex; align-items: center; padding-left: 12px; }
.time svg { width: 17px; height: 17px; color: #cfcfd3; }
.time u { width: 1px; height: 20px; margin-left: 10px; background: #d0d0d4; }
.time s { margin-left: -15px; text-decoration: none; font: 15.300px/20px "Liberation Mono", monospace; color: #a0a0a3; padding-top: 2px; }
.set s { color: #808084; }
.pl { width: 51px; height: 45px; margin-left: 1px; border: 1px solid #8f8f98; border-radius: 4px; display: flex; align-items: center; justify-content: center; color: #8f8f98; }
.pl svg { width: 15px; height: 15px; }

.contacts { margin: 11px 15px 0; display: flex; flex-direction: column; gap: 17px; }
.cp { height: 198px; border: 1px solid #ececec; border-radius: 4px; background: #fafafa; }
.cph { display: flex; align-items: center; justify-content: space-between; height: 36px; margin: 12px 10px 0 18px; font-size: 16.400px; font-weight: 500; }
.gplus { width: 36px; height: 36px; border-radius: 4px; background: #29c254; color: #fff; display: flex; align-items: center; justify-content: center; }
.gplus svg { width: 16px; height: 16px; }
.cp hr { border: 0; height: 1px; background: #e9e9eb; margin: 15px 16px 11px; }
.crow { display: grid; grid-template-columns: 270px 359px 45px; gap: 15px; margin-left: 14px; }
.crow label { font-size: 11.800px; line-height: 16px; font-weight: 700; color: #757c86; }
.crow .inp { margin-top: 6px; }
.lb2 { display: flex; margin-bottom: -1px; }
.lb2 label { margin-bottom: 0; }
.lb2 label:first-child { width: 71px; }
.tel, .ico { display: flex; align-items: center; }
.tel { padding-left: 11px; }
.tel svg { margin-right: 8px; margin-top: 1px; color: #4b5563; }
.tel i { width: 2px; height: 20px; background: #e5e5e5; margin: 0 9px 0 3px; }
.ico { padding-left: 12px; }
.ico svg { color: #757d88; }
.ico i { width: 2px; height: 20px; background: #e5e5e5; margin: 0 14px 0 13px; }
.del { width: 45px; height: 45px; margin-top: 24px; border: 1px solid #ff4255; border-radius: 4px; background: #faf7f8; color: #ff4255; display: flex; align-items: center; justify-content: center; }

.web { margin: 11px 15px 0; height: 189px; padding-top: 10px; background: #fafafa; border-radius: 6px; }
.webh { display: flex; align-items: center; gap: 5px; margin: 0 30px 0 25px; height: 46px; }
.wi { width: 46px; height: 46px; background: #fff; border-radius: 4px; display: flex; align-items: center; justify-content: center; margin-right: auto; }
.webh .sq { width: 43px; height: 43px; }
.webh .gr { color: #bfebcb; }
.webr { margin: 15px 10px 18px; height: 2px; background: #efefef; }
.webf { display: grid; grid-template-columns: 1fr 1fr; gap: 30px; margin: 0 25px; }
.webf label { color: #757c86; font-weight: 400; }
.tiles { margin: 15px 15px 0; height: 190px; padding: 70px 10px 0; background: #f7f7f7; border-radius: 6px; display: grid; grid-template-columns: repeat(13, 50px); justify-content: space-between; grid-auto-rows: 50px; row-gap: 5px; }
.tiles span { border: 1px solid #e9e9e9; border-radius: 4px; display: flex; align-items: center; justify-content: center; }
.tiles svg { width: 38px; height: 38px; }

.fonts { margin: 11px 15px 0; height: 112px; padding: 22px 15px 0; background: #f7f7f7; border-radius: 4px; display: grid; grid-template-columns: 1fr 1fr; gap: 30px; }
.fonts label { font-size: 9.500px; line-height: 16px; font-weight: 400; color: #757c86; }
.fonts .inp { height: 45px; margin-top: 5px; padding-left: 24px; line-height: 43px; border: 1px solid #b5b5ba; color: #000; font-family: "DejaVu Sans", sans-serif; font-size: 16px; box-shadow: 0 27px 14px -8px rgba(0, 0, 0, .03); }

aside { width: 256px; margin: 4200px 0 0 148px; }
.tabs { width: 212px; height: 38px; margin: 0 0 8px 22px; border: 2px solid #2ccf5a; border-radius: 19px; padding: 2px; display: flex; font-size: 13.700px; line-height: 30px; text-align: center; color: #29c254; }
.tabs b { flex: 1; }
.tabs b:first-child { background: #2ccf5a; color: #fff; border-radius: 15px; }
.device { width: 256px; height: 520px; border-radius: 42px; background: #000; border: 2px solid #85788e; box-shadow: inset 0 0 0 1.500px #3f3649; padding: 8px 10px 11px; position: relative; }
.device::before { content: ""; position: absolute; left: -4px; top: 84px; width: 3px; height: 110px; background: linear-gradient(#85788e 17px, transparent 17px 32px, #85788e 32px 66px, transparent 66px 76px, #85788e 76px); }
.device::after { content: ""; position: absolute; right: -4px; top: 140px; width: 3px; height: 51px; background: #85788e; }
.screen { position: relative; height: 497px; margin: 0 1px; border-radius: 32px; overflow: hidden; background: #fdfdfd; font-family: Lato, sans-serif; color: #2b3240; }
.band { height: 24px; background: #ecc472; }
.pc { margin: 0 16px; background: #fff; box-shadow: 0 6px 18px rgba(0, 0, 0, .05); }
.have { margin-top: -24px; height: 46px; padding: 0 15px 20px 12px; display: flex; align-items: center; justify-content: space-between; font-size: 17.500px; }
.have svg, .go { color: #757d88; }
.dish { margin-top: 20px; height: 81px; padding: 20px; }
.screen h3 { margin: 18px 40px 6px; text-align: center; font-size: 19.500px; line-height: 28.500px; font-weight: 400; letter-spacing: .1px; }
.link { height: 70px; display: flex; align-items: center; padding: 0 13px; }
.link div { flex: 1; margin-left: 10px; white-space: nowrap; }
.link b { display: block; font-size: 14.500px; line-height: 17px; font-weight: 400; }
.link small { display: block; font-size: 10px; line-height: 14px; color: #9a9aa0; letter-spacing: .3px; }
.kontakt { margin-top: 25px; height: 300px; padding: 20px 12px; color: #000; }
.kh { display: flex; align-items: center; gap: 17px; height: 54px; padding-bottom: 10px; border-bottom: 1px solid #ececee; font-size: 18.500px; letter-spacing: .3px; }
.kh span { width: 44px; height: 44px; background: #f9f9fa; border-radius: 3px; display: flex; align-items: center; justify-content: center; }
.kr { display: flex; align-items: center; height: 71px; border-bottom: 1px solid #ececee; padding-bottom: 1px; }
.kr span { width: 40px; height: 40px; border-radius: 50%; background: #f9f9fa; color: #8a8a90; display: flex; align-items: center; justify-content: center; }
.kr div { margin-left: 10px; height: 38px; }
.kr small { display: block; font-size: 10.800px; line-height: 14px; color: #8e8e95; letter-spacing: .2px; margin-top: 2px; }
.kr b { display: block; font-weight: 400; font-size: 13.800px; line-height: 20px; }
.status { position: absolute; top: 13px; left: 20px; right: 15px; display: flex; justify-content: space-between; align-items: center; color: #000; font-size: 8px; line-height: 10px; }
.island { position: absolute; top: 8px; left: 71px; width: 81px; height: 23px; border-radius: 12px; background: #000; }
.island i { position: absolute; right: 8px; top: 8px; width: 7px; height: 7px; border-radius: 50%; background: #0b1440; }
.homebar { position: absolute; bottom: 10px; left: 65px; width: 100px; height: 4px; border-radius: 2px; background: #000; }

.bar { position: absolute; top: 4180px; left: 0; width: 1440px; height: 71px; background: #fff; box-shadow: 0 0 8px rgba(0, 0, 0, .18); padding: 0 135px; display: flex; align-items: center; }
.logo { display: flex; gap: 8px; color: #111; width: 352px; }
.logo span { display: block; font-size: 15.500px; line-height: 16px; font-weight: 300; letter-spacing: -.2px; }
.logo strong { display: block; font-size: 20.500px; line-height: 18px; font-weight: 500; white-space: nowrap; letter-spacing: -.2px; word-spacing: -4px; }
.steps { display: flex; align-items: center; flex: 1; font-size: 13.600px; white-space: nowrap; color: #757d88; }
.g { color: #29c254; }
.st1, .st2, .st3 { margin-left: 12px; }
.st1 { width: 120px; letter-spacing: -.05px; }
.st2 { width: 41px; letter-spacing: -.2px; }
.arr, .arr2 { margin: 0 13px 0 8px; }
.num { width: 22px; height: 22px; border-radius: 50%; background: #757d88; color: #fff; font-weight: 700; text-align: center; line-height: 22px; }
.gn { background: #29c254; }
.help, .menu { width: 40px; height: 40px; border-radius: 4px; display: flex; align-items: center; justify-content: center; }
.help { border: 1px solid #bbb; margin-right: 10px; }
.menu { background: #29c254; flex-direction: column; gap: 6px; }
.menu i { width: 18px; height: 2px; background: #fff; }
.foot { position: absolute; top: 5184px; left: 0; width: 1440px; height: 76px; background: #fff; box-shadow: 0 0 10px rgba(0, 0, 0, .05); padding: 0 135px; display: flex; align-items: center; justify-content: space-between; font-size: 15.800px; font-weight: 700; }
.back, .next { width: 152px; height: 52px; border-radius: 4px; display: flex; align-items: center; justify-content: center; }
.back { border: 1px solid #29c254; color: #29c254; gap: 8px; }
.next { background: linear-gradient(135deg, #77df96, #72d88f); color: #fff; gap: 13px; }
```
